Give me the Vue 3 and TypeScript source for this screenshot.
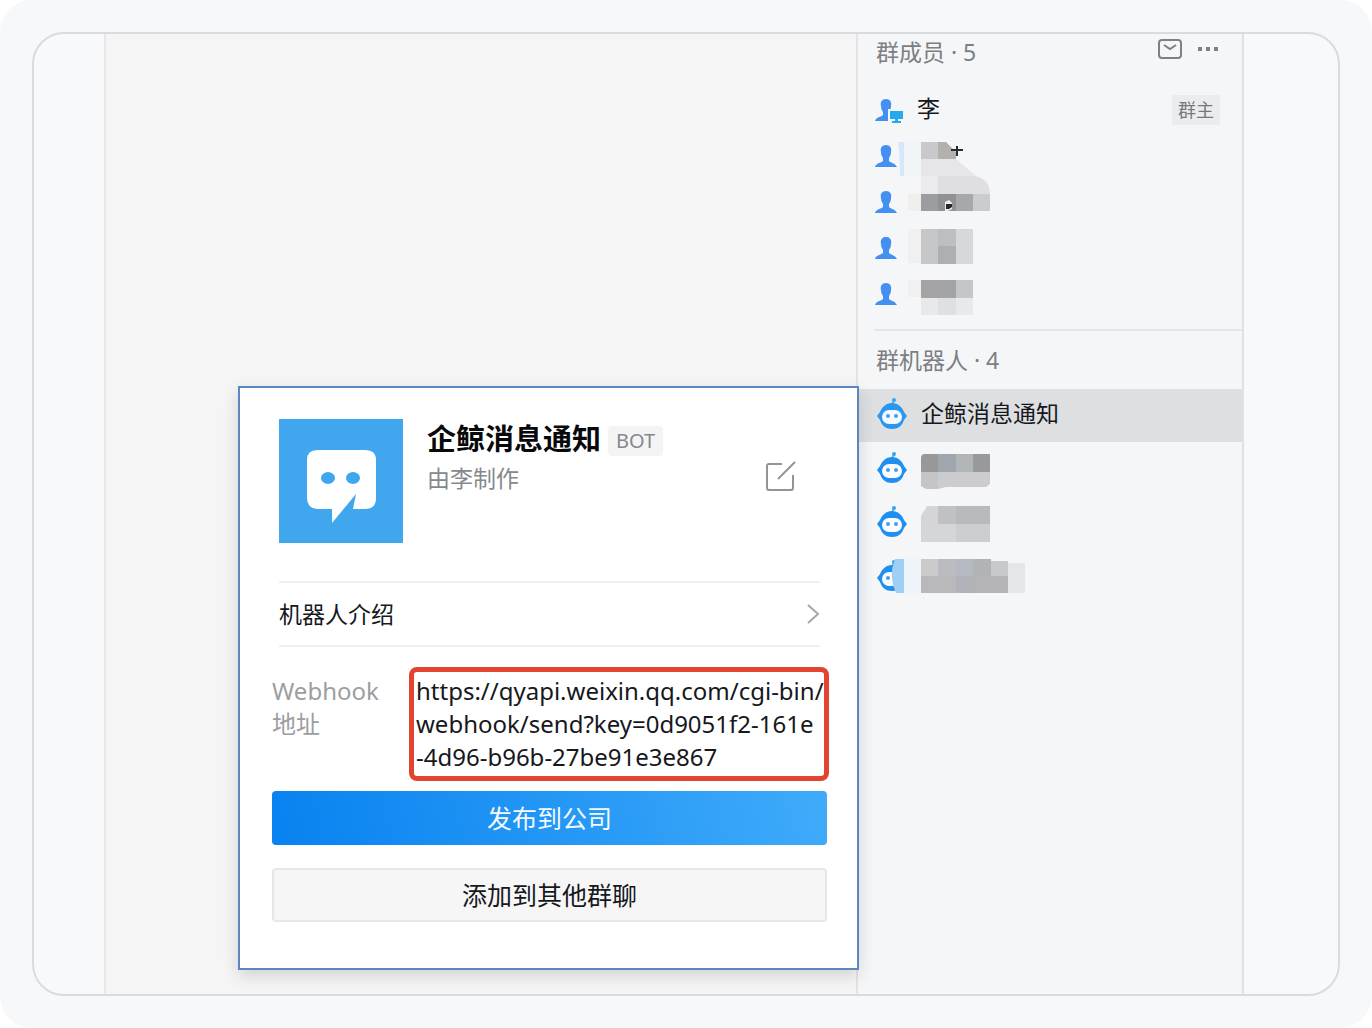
<script setup lang="ts">
interface Shape {
  d: string
  fill: string
}

interface Row {
  id: number
  mask: Shape[]
}

const block = (x: number, y: number, w: number, h: number, fill: string): Shape => ({
  d: `M${x} ${y}h${w}v${h}h${-w}z`,
  fill,
})

// Mask shapes use the row's own coordinates, starting right of the avatar.
const members: Row[] = [
  {
    id: 1,
    mask: [
      { d: 'M2 9h6v34h-4q0-20-2-34z', fill: '#d8e6f9' },
      block(8, 9, 17, 34, '#f2f5f8'),
      block(25, 9, 17, 17, '#c9c9cb'),
      { d: 'M42 9h8l10 10v7H42z', fill: '#b3b1ad' },
      { d: 'M25 26h35l20 17H25z', fill: '#e6e6e8' },
      { d: 'M55 16h5v-3h2v3h5v2h-5v5h-2v-5h-5z', fill: '#25293a' },
    ],
  },
  {
    id: 2,
    mask: [
      block(12, 15, 13, 17, '#f0efed'),
      block(25, -3, 17, 18, '#ebebed'),
      { d: 'M42-3h37q15 3 15 18H42z', fill: '#dfdfe2' },
      block(25, 15, 17, 17, '#9c9da1'),
      block(42, 15, 18, 17, '#909195'),
      block(60, 15, 17, 17, '#a7a8ac'),
      block(77, 15, 17, 17, '#cbccd0'),
      { d: 'M49 23l4-2 3 3v6l-4 2h-3z', fill: '#f1eeee' },
      { d: 'M50 25h6v3l-3 2h-3z', fill: '#25262b' },
    ],
  },
  {
    id: 3,
    mask: [
      block(12, 4, 13, 34, '#f0f0f1'),
      block(25, 4, 17, 35, '#c6c7c8'),
      block(42, 4, 18, 17, '#bdbebf'),
      block(60, 4, 17, 35, '#d5d9db'),
      block(42, 21, 18, 18, '#adafb1'),
    ],
  },
  {
    id: 4,
    mask: [
      block(12, 9, 13, 17, '#f0f0f0'),
      block(25, 9, 35, 18, '#a4a4a6'),
      block(60, 9, 17, 18, '#c3c7cb'),
      block(25, 27, 52, 17, '#e8e9eb'),
      block(42, 27, 18, 17, '#dfe0e1'),
    ],
  },
]

const robots: Row[] = [
  {
    id: 1,
    mask: [
      { d: 'M29 11h13v18H25V15q0-4 4-4z', fill: '#98989a' },
      block(42, 11, 18, 18, '#a0a6ae'),
      block(60, 11, 17, 18, '#b2b5b5'),
      block(77, 11, 17, 18, '#98999b'),
      { d: 'M25 29h17v17H30l-5-3z', fill: '#c5c5c8' },
      { d: 'M42 29h52v12l-4 3H50l-8 2z', fill: '#cccccf' },
    ],
  },
  {
    id: 2,
    mask: [
      { d: 'M31 9h11v18H25v-8z', fill: '#d5d5d8' },
      block(42, 9, 18, 18, '#c0c1c3'),
      block(60, 9, 34, 18, '#b8babc'),
      block(25, 27, 35, 18, '#d5d6d8'),
      block(60, 27, 34, 18, '#cdced0'),
    ],
  },
  {
    id: 3,
    mask: [
      { d: 'M-1 8H8v34H0q-8-17-1-34z', fill: '#a0cef4' },
      block(8, 8, 17, 34, '#eff4f9'),
      block(25, 8, 17, 17, '#cbcbcc'),
      block(42, 8, 18, 17, '#bbbcbf'),
      block(60, 8, 17, 17, '#b5b9c1'),
      block(77, 8, 18, 17, '#b2b3b6'),
      block(95, 10, 17, 15, '#c7c9cb'),
      block(112, 12, 17, 30, '#e3e7ea'),
      block(25, 25, 35, 17, '#b9b9bc'),
      block(60, 25, 17, 17, '#b1b3ba'),
      block(77, 25, 35, 17, '#b4b4b6'),
    ],
  },
]

const urlLines: string[] = [
  'https://qyapi.weixin.qq.com/cgi-bin/',
  'webhook/send?key=0d9051f2-161e',
  '-4d96-b96b-27be91e3e867',
]
</script>

<template>
  <div class="page">
    <main class="frame">
      <section class="chat">
        <article class="card">
          <header class="card-head">
            <svg class="logo" viewBox="0 0 124 124" aria-hidden="true">
              <path d="M0 0h124v124H0z" fill="#40a7ee" />
              <path
                d="M38 31h48q11 0 11 10v38q0 11-11 11H74l3-15-24 29V90H38q-10-1-10-11V41q0-10 10-10z"
                fill="#fff"
              />
              <ellipse cx="49" cy="59" rx="7" ry="6" fill="#40a7ee" />
              <ellipse cx="74" cy="59" rx="7" ry="6" fill="#40a7ee" />
            </svg>
            <div class="identity">
              <div class="name-line">
                <h1>企鲸消息通知</h1>
                <span class="tag">BOT</span>
              </div>
              <p>由李制作</p>
            </div>
            <button class="icon-button edit" type="button" aria-label="编辑">
              <svg width="32" height="32" viewBox="0 0 32 32" fill="none" stroke="#929497" stroke-width="2">
                <path d="M17 4H4q-2 0-2 2v22q0 2 2 2h22q2 0 2-2V15" />
                <path d="M13 19L30 2" />
              </svg>
            </button>
          </header>

          <button class="intro" type="button">
            <span>机器人介绍</span>
            <svg width="14" height="22" viewBox="0 0 14 22" fill="none" stroke="#a5a7aa" stroke-width="2">
              <path d="M2 2l10 9-10 9" />
            </svg>
          </button>

          <dl class="webhook">
            <dt>Webhook<br />地址</dt>
            <dd>
              <span v-for="line in urlLines" :key="line">{{ line }}</span>
            </dd>
          </dl>

          <div class="actions">
            <button class="primary" type="button">发布到公司</button>
            <button class="secondary" type="button">添加到其他群聊</button>
          </div>
        </article>
      </section>

      <aside class="side">
        <header class="side-head">
          <h2>群成员 · 5</h2>
          <button class="icon-button" type="button" aria-label="消息">
            <svg width="26" height="22" viewBox="0 0 26 22" fill="none" stroke="#7d8085" stroke-width="2">
              <rect x="2" y="2" width="22" height="18" rx="3" />
              <path d="M7 7l6 4 6-4" />
            </svg>
          </button>
          <button class="icon-button" type="button" aria-label="更多">
            <svg width="22" height="22" viewBox="0 0 22 22" fill="#7d8085">
              <path d="M1 9h4v4H1zM9 9h4v4H9zM17 9h4v4h-4z" />
            </svg>
          </button>
        </header>

        <ul class="members">
          <li>
            <svg class="person" viewBox="0 0 30 26" aria-hidden="true">
              <path
                d="M12 1c4 0 6 3 5 7 0 3-1 4-2 6v3c2 2 6 2 8 6H1c1-4 6-4 8-6v-3c-1-2-2-3-2-6-1-4 1-7 5-7z"
                fill="#4390f2"
              />
              <path d="M14 11h16v15H14z" fill="#f5f6f8" />
              <path d="M16 13h13v8H16zM21 21h3v2h3v2h-9v-2h3z" fill="#27a9ec" />
            </svg>
            <span class="member-name">李</span>
            <span class="owner">群主</span>
          </li>
          <li v-for="row in members" :key="row.id">
            <svg class="person" viewBox="0 0 30 26" aria-hidden="true">
              <path
                d="M12 1c4 0 6 3 5 7 0 3-1 4-2 6v3c2 2 6 2 8 6H1c1-4 6-4 8-6v-3c-1-2-2-3-2-6-1-4 1-7 5-7z"
                fill="#4390f2"
              />
            </svg>
            <svg class="mask" width="132" height="46" viewBox="0 0 132 46" aria-hidden="true">
              <path v-for="(shape, i) in row.mask" :key="i" :d="shape.d" :fill="shape.fill" />
            </svg>
          </li>
        </ul>

        <h2 class="robots-title">群机器人 · 4</h2>
        <ul class="robots">
          <li class="selected">
            <svg class="robot" viewBox="0 0 32 32" aria-hidden="true">
              <path d="M16 7l2-5" stroke="#54b5f5" stroke-width="2" />
              <circle cx="18" cy="2" r="2" fill="#36a5f2" />
              <path d="M16 5c6 0 10 4 12 9l3 4-3 4c-2 6-6 9-12 9S6 28 4 22l-3-4 3-4c2-5 6-9 12-9z" fill="#2897f3" />
              <rect x="6" y="12" width="20" height="14" rx="7" fill="#f4faff" />
              <circle cx="12" cy="18" r="2" fill="#429fee" />
              <circle cx="20" cy="18" r="2" fill="#429fee" />
            </svg>
            <span>企鲸消息通知</span>
          </li>
          <li v-for="row in robots" :key="row.id">
            <svg class="robot" viewBox="0 0 32 32" aria-hidden="true">
              <path d="M16 7l2-5" stroke="#54b5f5" stroke-width="2" />
              <circle cx="18" cy="2" r="2" fill="#36a5f2" />
              <path d="M16 5c6 0 10 4 12 9l3 4-3 4c-2 6-6 9-12 9S6 28 4 22l-3-4 3-4c2-5 6-9 12-9z" fill="#1f8ff0" />
              <rect x="6" y="12" width="20" height="14" rx="7" fill="#fafcff" />
              <circle cx="12" cy="18" r="2" fill="#429fee" />
              <circle cx="20" cy="18" r="2" fill="#429fee" />
            </svg>
            <svg class="mask" width="132" height="52" viewBox="0 0 132 52" aria-hidden="true">
              <path v-for="(shape, i) in row.mask" :key="i" :d="shape.d" :fill="shape.fill" />
            </svg>
          </li>
        </ul>
      </aside>
    </main>
  </div>
</template>

<style>
body {
  background: #fff;
}
</style>

<style scoped>
* {
  box-sizing: border-box;
  margin: 0;
  padding: 0;
}

.page {
  display: flex;
  min-height: 100vh;
  padding: 32px;
  border-radius: 32px;
  background: #f7f8fa;
  color: #16181c;
  font-family: "Noto Sans", "Noto Sans CJK SC", sans-serif;
  font-size: 23px;
  line-height: 33px;
}

.frame {
  flex: 1;
  display: grid;
  grid-template-columns: minmax(0, 1fr) 388px;
  padding: 0 94px 0 70px;
  border: 2px solid #d9dbde;
  border-radius: 32px;
  background: #f7f9fb;
}

button {
  border: 0;
  background: none;
  color: inherit;
  font: inherit;
  cursor: pointer;
}

svg {
  display: block;
  flex: none;
}

ul {
  list-style: none;
}

.chat {
  display: flex;
  align-items: flex-end;
  justify-content: flex-end;
  padding-bottom: 24px;
  border-left: 2px solid #e6e7e9;
  background: #f5f5f6;
}

.card {
  position: relative;
  z-index: 1;
  width: 621px;
  margin-right: -3px;
  padding: 31px 30px 46px 32px;
  border: 2px solid #5b85c3;
  background: #fff;
  box-shadow: 0 6px 16px rgba(0, 0, 0, 0.14);
}

.card-head {
  display: flex;
  gap: 24px;
  height: 162px;
  padding: 0 30px 0 7px;
}

.logo {
  width: 124px;
  height: 124px;
}

.identity {
  flex: 1;
}

.name-line {
  display: flex;
  align-items: center;
  gap: 7px;
  height: 38px;
}

h1 {
  font-size: 29px;
  font-weight: 700;
  color: #08090b;
}

.tag {
  margin-top: 6px;
  padding: 0 8px;
  border-radius: 4px;
  background: #f4f4f5;
  color: #85888c;
  font-size: 20px;
  line-height: 30px;
}

.identity p {
  line-height: 42px;
  color: #85888c;
}

.edit {
  align-self: flex-start;
  margin-top: 41px;
}

.intro {
  display: flex;
  align-items: center;
  justify-content: space-between;
  width: 541px;
  height: 66px;
  margin-left: 7px;
  border-top: 2px solid #f0f0f1;
  border-bottom: 2px solid #f0f0f1;
}

.webhook {
  display: flex;
  margin: 20px -2px 10px 0;
  font-size: 24px;
}

.webhook dt {
  flex: 1;
  padding-top: 7px;
  color: #9c9ea1;
}

.webhook dd {
  width: 420px;
  padding: 2px 2px 3px;
  border: 5px solid #e2442f;
  border-radius: 8px;
  white-space: nowrap;
}

.webhook dd span {
  display: block;
}

.actions {
  display: grid;
  gap: 23px;
}

.actions button {
  height: 54px;
  border-radius: 4px;
  font-size: 25px;
}

.actions .primary {
  background: linear-gradient(75deg, #0882f0, #3fabfa);
  color: #f2f9ff;
}

.actions .secondary {
  border: 2px solid #e6e7e9;
  background: #f6f6f7;
}

.side {
  border-left: 2px solid #e2e3e6;
  border-right: 2px solid #dfe1e4;
  background: #f5f6f8;
}

h2 {
  color: #7b7e82;
  font-size: 23px;
  font-weight: 400;
}

.side-head {
  display: flex;
  align-items: center;
  gap: 14px;
  height: 36px;
  padding: 0 23px 0 18px;
}

.side-head h2 {
  flex: 1;
}

.side-head .icon-button {
  margin-bottom: 6px;
}

.members {
  margin: 17px 0 0 16px;
  padding-bottom: 12px;
  border-bottom: 2px solid #e4e5e7;
}

.members li {
  display: flex;
  align-items: center;
  height: 46px;
}

.person {
  width: 30px;
  height: 26px;
  margin-top: 2px;
}

.member-name {
  flex: 1;
  margin: 0 0 4px 13px;
}

.owner {
  margin-right: 22px;
  padding: 0 6px;
  background: #ebecee;
  color: #75787c;
  font-size: 18px;
  line-height: 30px;
}

.mask {
  margin-left: -8px;
  overflow: visible;
}

.robots-title {
  padding: 13px 18px 12px;
}

.robots {
  display: grid;
  gap: 1px;
}

.robots li {
  display: flex;
  align-items: center;
  height: 53px;
  padding: 0 0 4px 18px;
}

.robots .selected {
  background: #dddfe1;
}

.robot {
  width: 32px;
  height: 32px;
}

.selected span {
  margin-left: 13px;
}

.robots .mask {
  margin: 2px 0 0 -12px;
}
</style>
